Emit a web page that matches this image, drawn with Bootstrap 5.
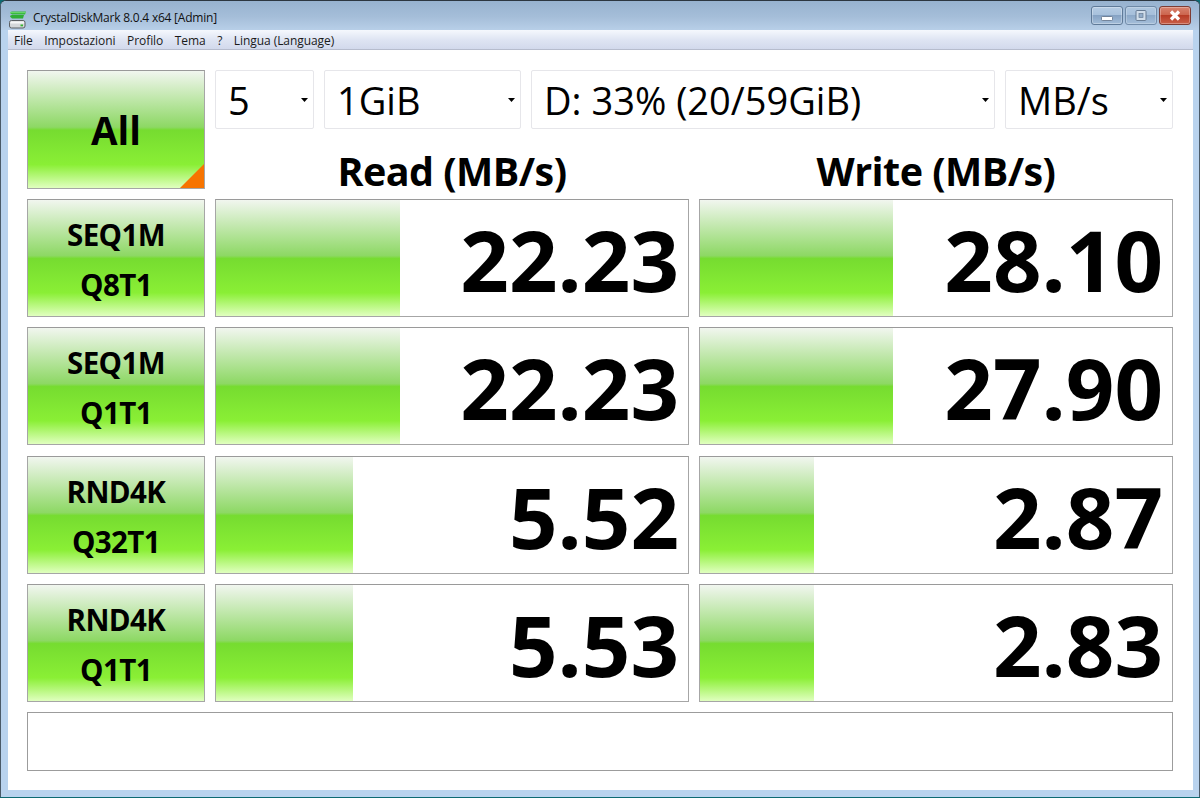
<!doctype html>
<html lang="it">
<head>
<meta charset="utf-8">
<title>CrystalDiskMark 8.0.4 x64 [Admin]</title>
<link rel="stylesheet" href="https://cdn.jsdelivr.net/npm/bootstrap@5.3.0/dist/css/bootstrap.min.css">
<style>
html,body{height:100%;margin:0;background:#0d6a72;overflow:hidden}
body{font-family:"Open Sans","Noto Sans",sans-serif;color:#000}
.winframe{height:797px;background:#b9d3ee;border-radius:6px 6px 0 0;border:1px solid #4a5a68;border-bottom:0;border-top-color:#2c3640;padding:0 6px 7px 7px;display:flex;flex-direction:column}
.titlebar{height:29px;margin:0 -6px 0 -7px;padding:0 8px 0 8px;flex:none;background:linear-gradient(180deg,#97b2cf 0%,#a5bed9 55%,#b8cfe8 100%);border-radius:5px 5px 0 0}
.appicon{margin-top:8px}
.apptitle{font-size:12px;color:#111;margin-left:6px;letter-spacing:-.22px;padding-top:5px}
.capbtn{height:19px;border:1px solid #5f7a98;border-radius:3px;display:flex;justify-content:center;box-shadow:inset 0 0 0 1px rgba(255,255,255,.3)}
.capmin,.capmax{width:32px;background:linear-gradient(180deg,#b5cce4 0%,#a8c1dc 45%,#86a3c4 50%,#a2bcd8 100%)}
.capmax{opacity:.75}
.capclose{width:32px;background:linear-gradient(180deg,#d8836f 0%,#cc664f 45%,#b83c26 50%,#c9604a 100%);border-color:#7e3c33}
.capgap{gap:2px;margin-top:-1px}
.menustrip{height:20px;flex:none;background:linear-gradient(180deg,#f5f8fd 0%,#dfe5f3 50%,#d2d9ec 100%);border-bottom:1px solid #b6bccd;font-size:12px;line-height:21px;padding-left:6px;gap:11.5px;color:#1a1a1a;letter-spacing:-.06px}
.client{flex:1;background:#fff;padding:20px 20px 19px 19px}
.benchgrid{display:grid;grid-template-columns:178px 474px 474px;grid-template-rows:59px 50px 118px 119px 118px 118px 59px;column-gap:10px;row-gap:10px}
.benchgrid>*{min-width:0}
.gloss{background:linear-gradient(180deg,#f1f6ef 0%,#8dd864 48%,#76dc30 50.5%,#8aef35 80%,#e0ffbf 100%)}
.tilebox{border:1px solid #a6a6a6;border-top-color:#9a9a9a;height:118px;align-self:start}
.testbtn{display:flex;flex-direction:column;align-items:center;justify-content:center;font-weight:700;font-size:29.5px;line-height:50px;letter-spacing:-.6px;padding:3px 0 0}
.tilebox.allbtn{grid-column:1;grid-row:1/3;height:119px}
.alltext{font-size:38.5px;letter-spacing:0;padding:0}
.corner{position:absolute;right:0;bottom:0;width:0;height:0;border-left:24px solid transparent;border-bottom:24px solid #f77400}
.pickers{grid-column:2/4;grid-row:1;display:flex;gap:10px}
.pick{height:59px;border:1px solid #e6e6ea;border-radius:2px;background-color:#fff;box-shadow:none;font-size:38px;line-height:59px;padding:0 0 0 12px;color:#000;font-family:inherit;background-image:url("data:image/svg+xml,%3Csvg xmlns='http://www.w3.org/2000/svg' width='7' height='4'%3E%3Cpath d='M0 0h7L3.5 4z'/%3E%3C/svg%3E");background-size:7px 4px;background-position:right 5px center;background-repeat:no-repeat}
.w1{width:99px}.w2{width:197px}.w3{width:464px}.w4{width:168px}
.headcell{font-size:39.5px;font-weight:700;line-height:50px;text-align:center;padding-top:7px;letter-spacing:-.55px;white-space:nowrap}
.resultbox{overflow:hidden;background:#fff}
.meter{position:absolute;left:0;top:0;bottom:0}
.figure{position:relative;font-size:85px;font-weight:700;line-height:1;letter-spacing:0;padding-right:9px;padding-top:3px;text-shadow:0 0 1px #fff}
.commentbox{grid-column:1/4;height:59px;border-color:#9c9c9c;background:#fff}
</style>
</head>
<body>
<div class="winframe">
  <div class="titlebar d-flex align-items-center">
    <svg class="appicon" width="18" height="18" viewBox="0 0 18 18" aria-hidden="true">
      <path d="M1 2 Q1 0.5 3 0.5H17L16 3.5H3z" fill="#35b83a"/>
      <path d="M1 1.6H16.6" stroke="#7be07c" stroke-width=".8"/>
      <path d="M1 5.5 Q1 4 3 4H15L14 7.5H3z" fill="#2fae35"/>
      <rect x="0.5" y="9.5" width="15.5" height="7.5" rx="2" fill="#d4d7d9" stroke="#5b5f63"/>
      <rect x="1.5" y="10.5" width="13.5" height="2" fill="#f5f6f6"/>
      <rect x="11.5" y="13.5" width="2.5" height="1.8" fill="#34b52e"/>
    </svg>
    <span class="apptitle flex-grow-1">CrystalDiskMark 8.0.4 x64 [Admin]</span>
    <div class="d-flex capgap">
      <div class="capbtn capmin"><svg width="12" height="17" aria-hidden="true"><rect x=".5" y="9.5" width="11" height="4" rx="1" fill="#fff" stroke="#5d6f86" stroke-width=".8"/></svg></div>
      <div class="capbtn capmax"><svg width="12" height="17" aria-hidden="true"><rect x="1" y="3.5" width="10" height="10" rx="1" fill="#dfe8f1" stroke="#55677e"/><rect x="4" y="6.5" width="4" height="4" fill="#8ea8c6" stroke="#55677e" stroke-width=".7"/></svg></div>
      <div class="capbtn capclose"><svg width="14" height="17" aria-hidden="true"><path d="M3 4.5l8 8M11 4.5l-8 8" stroke="#fff" stroke-width="3.2"/></svg></div>
    </div>
  </div>
  <div class="menustrip d-flex">
    <span>File</span><span>Impostazioni</span><span>Profilo</span><span>Tema</span><span>?</span><span>Lingua (Language)</span>
  </div>
  <main class="client">
    <div class="benchgrid">
      <div class="allbtn tilebox gloss testbtn alltext position-relative">All<span class="corner"></span></div>
      <div class="pickers">
        <select class="pick w1 form-select" aria-label="Count"><option>5</option></select>
        <select class="pick w2 form-select" aria-label="Size"><option>1GiB</option></select>
        <select class="pick w3 form-select" aria-label="Drive"><option>D: 33% (20/59GiB)</option></select>
        <select class="pick w4 form-select" aria-label="Unit"><option>MB/s</option></select>
      </div>
      <div class="headcell" style="grid-column:2">Read (MB/s)</div>
      <div class="headcell" style="grid-column:3">Write (MB/s)</div>

      <div class="tilebox gloss testbtn"><span>SEQ1M</span><span>Q8T1</span></div>
      <div class="tilebox resultbox position-relative d-flex align-items-center justify-content-end"><div class="meter gloss" style="width:184px"></div><span class="figure">22.23</span></div>
      <div class="tilebox resultbox position-relative d-flex align-items-center justify-content-end"><div class="meter gloss" style="width:193px"></div><span class="figure">28.10</span></div>

      <div class="tilebox gloss testbtn"><span>SEQ1M</span><span>Q1T1</span></div>
      <div class="tilebox resultbox position-relative d-flex align-items-center justify-content-end"><div class="meter gloss" style="width:184px"></div><span class="figure">22.23</span></div>
      <div class="tilebox resultbox position-relative d-flex align-items-center justify-content-end"><div class="meter gloss" style="width:193px"></div><span class="figure">27.90</span></div>

      <div class="tilebox gloss testbtn"><span>RND4K</span><span>Q32T1</span></div>
      <div class="tilebox resultbox position-relative d-flex align-items-center justify-content-end"><div class="meter gloss" style="width:137px"></div><span class="figure">5.52</span></div>
      <div class="tilebox resultbox position-relative d-flex align-items-center justify-content-end"><div class="meter gloss" style="width:114px"></div><span class="figure">2.87</span></div>

      <div class="tilebox gloss testbtn"><span>RND4K</span><span>Q1T1</span></div>
      <div class="tilebox resultbox position-relative d-flex align-items-center justify-content-end"><div class="meter gloss" style="width:137px"></div><span class="figure">5.53</span></div>
      <div class="tilebox resultbox position-relative d-flex align-items-center justify-content-end"><div class="meter gloss" style="width:114px"></div><span class="figure">2.83</span></div>

      <div class="tilebox commentbox"></div>
    </div>
  </main>
</div>
</body>
</html>
